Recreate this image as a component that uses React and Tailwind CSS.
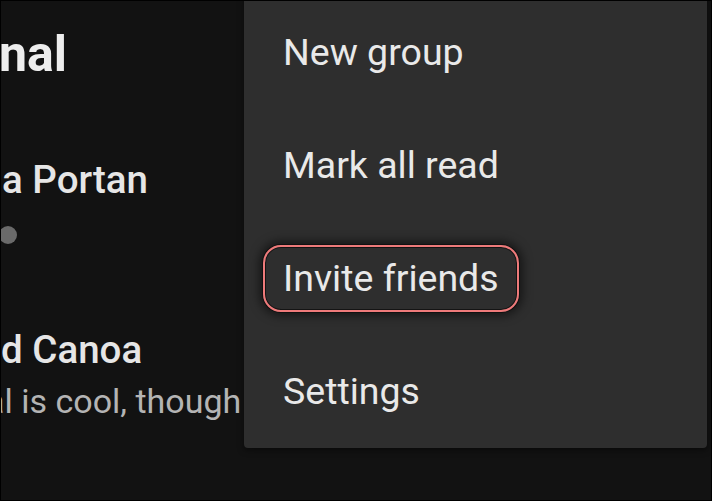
import React from 'react';

const menuItems = ['New group', 'Mark all read', 'Invite friends', 'Settings'];

function MenuItem({ label, focused }) {
  return (
    <div className="h-[113px] flex items-center pl-[19px]">
      {focused ? (
        <span className="h-[67px] flex items-center px-[18px] rounded-[18px] border-2 border-[#ee7a7a] shadow-[0_0_0_1px_#111,0_0_10px_4px_rgba(0,0,0,0.5),inset_0_0_0_1px_#141414] text-[37.5px] text-[#e9e9e9] leading-none">
          {label}
        </span>
      ) : (
        <span className="px-[20px] text-[37.5px] text-[#e9e9e9] leading-none">{label}</span>
      )}
    </div>
  );
}

export default function App() {
  return (
    <div
      className="relative w-[712px] h-[501px] overflow-hidden bg-[#121212] border border-black box-border"
      style={{ fontFamily: 'Roboto, "Noto Sans", sans-serif' }}
    >
      {/* Chat list behind the menu */}
      <div className="flex flex-col">
        <h1 className="pt-[24px] ml-[-2px] text-[50px] leading-[58px] font-bold text-[#ededed] whitespace-nowrap">
          nal
        </h1>

        <div className="mt-[75px] ml-[1px] text-[38.5px] leading-[44px] font-medium text-[#e6e6e6] whitespace-nowrap">
          a Portan
        </div>
        <div className="mt-[24px] ml-[-2px] w-[18px] h-[18px] rounded-full bg-[#6a6a6a]" />

        <div className="mt-[84px] ml-[0px] text-[38.5px] leading-[44px] font-medium text-[#e6e6e6] whitespace-nowrap">
          d Canoa
        </div>
        <div className="mt-[9px] ml-[-15px] text-[34px] leading-[40px] text-[#b4b4b4] whitespace-nowrap">
          al is cool, though
        </div>
      </div>

      {/* Overflow menu */}
      <div className="absolute top-[-5px] left-[243px] w-[463px] bg-[#2e2e2e] rounded-b-[4px] shadow-[0_2px_6px_rgba(0,0,0,0.5)] flex flex-col">
        {menuItems.map((item) => (
          <MenuItem key={item} label={item} focused={item === 'Invite friends'} />
        ))}
      </div>
    </div>
  );
}
